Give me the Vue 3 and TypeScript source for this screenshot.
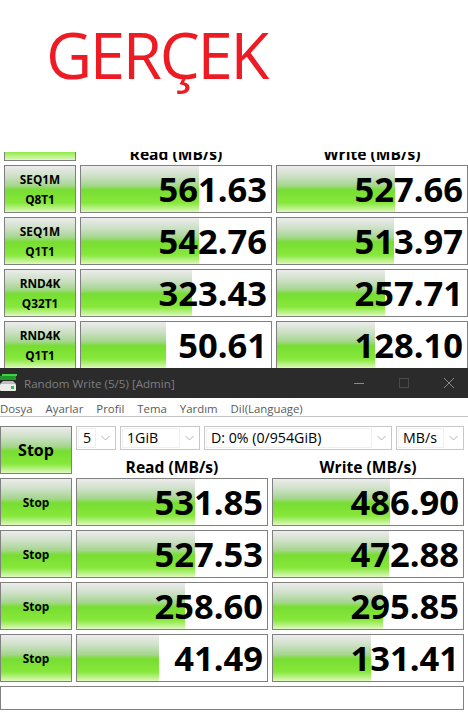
<template>
  <div class="page">
    <div class="caption">GERÇEK</div>

    <!-- upper run, scrolled so only the results are showing -->
    <section class="clip">
      <div class="bench bench-upper">
        <div class="top-row">
          <div class="btn btn-all"></div>
          <div class="head">Read (MB/s)</div>
          <div class="head">Write (MB/s)</div>
        </div>
        <div v-for="row in upperRows" :key="row.name + row.sub" class="row">
          <div class="btn btn-two">
            <span>{{ row.name }}</span>
            <span>{{ row.sub }}</span>
          </div>
          <div class="cell" :style="{ '--fill': row.readFill + 'px' }">{{ row.read }}</div>
          <div class="cell" :style="{ '--fill': row.writeFill + 'px' }">{{ row.write }}</div>
        </div>
      </div>
    </section>

    <header class="titlebar">
      <svg class="app-icon" width="17" height="17" viewBox="0 0 17 17">
        <rect x="2" y="0" width="15" height="2" fill="#3ed43f" />
        <rect x="0" y="2" width="16" height="4" fill="#1f9a2a" />
        <path d="M3 7h10l3 3H0z" fill="#bdbdbd" />
        <rect x="0" y="10" width="16" height="7" rx="1" fill="#ececec" />
        <rect x="11" y="12" width="3" height="3" fill="#3fbf45" />
      </svg>
      <span class="title">Random Write (5/5) [Admin]</span>
      <div class="win-btns">
        <svg width="12" height="12" viewBox="0 0 12 12"><path d="M1 6.5h10" stroke="#8a8a8a" fill="none" /></svg>
        <svg width="12" height="12" viewBox="0 0 12 12"><rect x="1.5" y="1.5" width="9" height="9" stroke="#4a4a4a" fill="none" /></svg>
        <svg width="12" height="12" viewBox="0 0 12 12"><path d="M1 1l10 10M11 1L1 11" stroke="#8a8a8a" fill="none" /></svg>
      </div>
    </header>

    <nav class="menu">
      <span v-for="item in menuItems" :key="item">{{ item }}</span>
    </nav>

    <div class="bench bench-lower">
      <div class="top-row">
        <div class="btn btn-all">Stop</div>
        <div class="controls">
          <div v-for="c in combos" :key="c.text" class="combo" :style="{ width: c.width + 'px' }">
            <span class="combo-text">{{ c.text }}</span>
            <span class="combo-arrow">
              <svg width="9" height="6" viewBox="0 0 9 6"><path d="M.5 1l4 4 4-4" stroke="#b4b4b4" fill="none" /></svg>
            </span>
          </div>
          <div class="head">Read (MB/s)</div>
          <div class="head">Write (MB/s)</div>
        </div>
      </div>
      <div v-for="row in lowerRows" :key="row.read" class="row">
        <div class="btn btn-stop">Stop</div>
        <div class="cell" :style="{ '--fill': row.readFill + 'px' }">{{ row.read }}</div>
        <div class="cell" :style="{ '--fill': row.writeFill + 'px' }">{{ row.write }}</div>
      </div>
      <div class="comment"></div>
    </div>
  </div>
</template>

<script setup lang="ts">
interface UpperRow {
  name: string
  sub: string
  read: string
  write: string
  readFill: number
  writeFill: number
}

interface LowerRow {
  read: string
  write: string
  readFill: number
  writeFill: number
}

const upperRows: UpperRow[] = [
  { name: 'SEQ1M', sub: 'Q8T1', read: '561.63', write: '527.66', readFill: 118, writeFill: 118 },
  { name: 'SEQ1M', sub: 'Q1T1', read: '542.76', write: '513.97', readFill: 118, writeFill: 117 },
  { name: 'RND4K', sub: 'Q32T1', read: '323.43', write: '257.71', readFill: 111, writeFill: 108 },
  { name: 'RND4K', sub: 'Q1T1', read: '50.61', write: '128.10', readFill: 85, writeFill: 98 }
]

const lowerRows: LowerRow[] = [
  { read: '531.85', write: '486.90', readFill: 118, writeFill: 117 },
  { read: '527.53', write: '472.88', readFill: 118, writeFill: 116 },
  { read: '258.60', write: '295.85', readFill: 108, writeFill: 110 },
  { read: '41.49', write: '131.41', readFill: 82, writeFill: 98 }
]

const menuItems = ['Dosya', 'Ayarlar', 'Profil', 'Tema', 'Yardım', 'Dil(Language)']

const combos = [
  { text: '5', width: 40 },
  { text: '1GiB', width: 80 },
  { text: 'D: 0% (0/954GiB)', width: 188 },
  { text: 'MB/s', width: 68 }
]
</script>

<style scoped>
.page {
  width: 468px;
  height: 716px;
  overflow: hidden;
  background: #fff;
  font-family: "Open Sans", "Noto Sans", sans-serif;
  color: #000;
}

.caption {
  height: 152px;
  box-sizing: border-box;
  padding: 11px 0 0 46px;
  font-size: 63.5px;
  letter-spacing: -2.3px;
  line-height: 87px;
  color: #ed1c24;
}

.clip {
  height: 216px;
  overflow: hidden;
}

.bench-upper {
  margin: -39px 0 0 4px;
  width: 464px;
}

.top-row {
  display: grid;
  grid-template-columns: 72px 192px 192px;
  column-gap: 4px;
  height: 48px;
  margin-bottom: 4px;
}

.head {
  align-self: end;
  height: 19px;
  padding-top: 5px;
  font-size: 15.6px;
  font-weight: 700;
  line-height: 24px;
  text-align: center;
}

.row {
  display: grid;
  grid-template-columns: 72px 192px 192px;
  column-gap: 4px;
  height: 48px;
  margin-bottom: 4px;
}

.btn {
  box-sizing: border-box;
  border: 1px solid #808080;
  background: linear-gradient(180deg, #ececec 0%, #cde0c6 22%, #a6d690 42%, #78dd32 52%, #86e83a 80%, #d0f5a8 97%, #e4f9c8 100%);
  display: flex;
  flex-direction: column;
  align-items: center;
  justify-content: center;
  font-weight: 700;
}

.btn-all {
  font-size: 16px;
}

.btn-two {
  font-size: 11.8px;
  line-height: 20px;
}

.btn-stop {
  font-size: 11.8px;
}

.cell {
  box-sizing: border-box;
  border: 1px solid #808080;
  background-color: #fff;
  background-image: linear-gradient(180deg, #ececec 0%, #cde0c6 22%, #a6d690 42%, #78dd32 52%, #86e83a 80%, #d0f5a8 97%, #e4f9c8 100%);
  background-size: var(--fill) 100%;
  background-repeat: no-repeat;
  font-size: 34.5px;
  font-weight: 700;
  line-height: 46px;
  text-align: right;
  padding-right: 4px;
}

.titlebar {
  height: 30px;
  background: #2b2b2b;
  display: flex;
  align-items: center;
  color: #7f7f7f;
  font-size: 11.6px;
}

.app-icon {
  flex: none;
  margin-top: -2px;
}

.title {
  margin-left: 7px;
}

.win-btns {
  margin-left: auto;
  display: flex;
  gap: 33px;
  padding-right: 13px;
}

.menu {
  height: 18px;
  border-bottom: 1px solid #c4c4c4;
  display: flex;
  gap: 13px;
  font-size: 11.4px;
  line-height: 21px;
  color: #5a5a5a;
}

.bench-lower {
  margin-top: 9px;
  width: 464px;
}

.controls {
  grid-column: 2 / 4;
  display: flex;
  flex-wrap: wrap;
  column-gap: 4px;
  align-content: space-between;
}

.controls .head {
  width: 192px;
  flex: none;
}

.combo {
  box-sizing: border-box;
  height: 24px;
  border: 1px solid #c8c8c8;
  display: flex;
  padding: 1px 0 1px 1px;
  font-size: 14.2px;
}

.combo-text {
  flex: 1;
  border: 1px solid #f0f0f0;
  padding-left: 4px;
  line-height: 18px;
  white-space: nowrap;
  overflow: hidden;
}

.combo-arrow {
  flex: none;
  width: 19px;
  display: flex;
  align-items: center;
  justify-content: center;
}

.comment {
  box-sizing: border-box;
  height: 24px;
  border: 1px solid #808080;
}
</style>

<style>
html,
body {
  margin: 0;
  background: #fff;
}
</style>
